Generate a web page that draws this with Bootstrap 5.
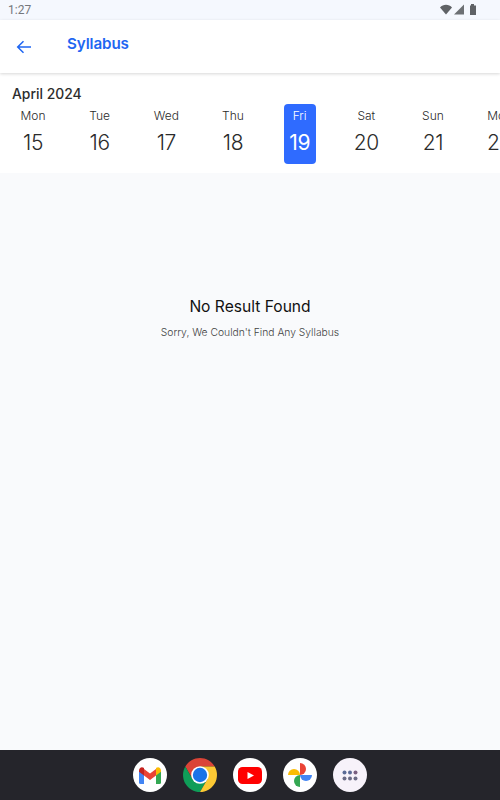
<!DOCTYPE html>
<html lang="en">
<head>
  <meta charset="UTF-8">
  <title>Syllabus</title>
  <meta name="viewport" content="width=device-width, initial-scale=1">
  <link href="https://cdn.jsdelivr.net/npm/bootstrap@5.3.0/dist/css/bootstrap.min.css" rel="stylesheet">
  <style>
    html, body { height: 800px; overflow: hidden; }
    body { background: #f9fafc; font-family: Inter, "Liberation Sans", sans-serif; }
    .status-strip { height: 20px; background: #f5f8fe; color: #74777c; font-family: Roboto, sans-serif; font-size: 12px; padding: 0 0 0 8px; }
    .status-icons { margin-right: 23px; }
    .app-head { height: 53px; background: #fff; box-shadow: 0 1px 3px rgba(0,0,0,.16); position: relative; z-index: 1; padding-left: 16px; }
    .app-title { color: #1f66f2; font-size: 15.2px; font-weight: 600; margin-left: 35px; margin-top: -5px; letter-spacing: -.1px; }
    .week-panel { height: 100px; background: #fff; overflow: hidden; }
    .month-name { color: #2d2d2d; font-size: 13.9px; font-weight: 500; padding: 13px 0 0 12px; line-height: 16px; }
    .week-row { width: 534px; margin-top: 2px; margin-left: -.3px; }
    .day-cell { width: 66.67px; flex: none; height: 60px; }
    .day-box { width: 32px; height: 60px; margin: 0 auto; text-align: center; border-radius: 4px; color: #2b2b2b; white-space: nowrap; display: flex; flex-direction: column; align-items: center; }
    .day-box.picked { background: #2f6bff; color: #fff; }
    .day-name { font-size: 12px; font-weight: 300; line-height: 16px; margin-top: 4px; }
    .day-num { font-size: 21px; font-weight: 300; line-height: 26px; margin-top: 6px; letter-spacing: -.3px; }
    .picked .day-num { font-weight: 400; }
    .empty-wrap { height: 577px; padding-top: 124px; }
    .empty-title { color: #111; font-size: 15.6px; font-weight: 400; line-height: 20px; }
    .empty-text { color: #3f3f3f; font-size: 10.3px; font-weight: 300; line-height: 14px; margin-top: 8px; }
    .dock { height: 50px; background: #25252b; gap: 16px; }
    .dock-icon { width: 34px; height: 34px; border-radius: 50%; background: #fff; }
    .dock-icon.tint { background: #f7f2fa; }
    .dock-icon.bare { background: transparent; }
  </style>
</head>
<body>
  <!-- status bar -->
  <div class="status-strip d-flex align-items-center justify-content-between">
    <span>1:27</span>
    <svg class="status-icons" width="38" height="12" viewBox="0 0 38 12">
      <path d="M1 3.500C4-.2 10-.2 13 3.500L7 10.500Z" fill="#5f6266"/>
      <path d="M15 10.500L25 .5V10.500Z" fill="#6d7074"/>
      <path d="M32 1.500V0h3v1.500H37V11H31V1.500Z" fill="#5f6266"/>
    </svg>
  </div>

  <!-- header -->
  <div class="app-head d-flex align-items-center">
    <svg width="16" height="14" viewBox="0 0 16 14" fill="none" stroke="#1f66f2" stroke-width="1.500">
      <path d="M15 7H2M7.500 1.200L1.700 7l5.800 5.800"/>
    </svg>
    <div class="app-title">Syllabus</div>
  </div>

  <!-- calendar -->
  <div class="week-panel">
    <div class="month-name">April 2024</div>
    <div class="week-row d-flex" id="weekRow"></div>
  </div>

  <!-- empty state -->
  <div class="empty-wrap text-center">
    <div class="empty-title">No Result Found</div>
    <div class="empty-text">Sorry, We Couldn't Find Any Syllabus</div>
  </div>

  <!-- launcher -->
  <div class="dock d-flex align-items-center justify-content-center">
    <div class="dock-icon d-flex align-items-center justify-content-center">
      <svg width="22" height="17" viewBox="0 0 22 17">
        <path d="M0 3.500V15.500Q0 17 1.500 17H5V7.500Z" fill="#4285f4"/>
        <path d="M17 7.500V17h3.500Q22 17 22 15.500V3.500Z" fill="#34a853"/>
        <path d="M5 2L11 6.500 17 2V8.500L11 13 5 8.500Z" fill="#ea4335"/>
        <path d="M0 3.500C0 .5 3-.8 5 1V8.500L0 4.700Z" fill="#c5221f"/>
        <path d="M22 3.500C22 .5 19-.8 17 1V8.500L22 4.700Z" fill="#fbbc04"/>
      </svg>
    </div>
    <div class="dock-icon bare d-flex align-items-center justify-content-center">
      <svg width="34" height="34" viewBox="0 0 34 34">
        <path d="M2.300 8.500A17 17 0 0 1 31.700 8.500H17L9.600 21.300Z" fill="#db4437"/>
        <path d="M2.300 8.500A17 17 0 0 0 17 34L24.400 21.300H9.600Z" fill="#0f9d58"/>
        <path d="M31.700 8.500A17 17 0 0 1 17 34L24.400 21.300 17 8.500Z" fill="#fcc934"/>
        <circle cx="17" cy="17" r="8.800" fill="#fff"/>
        <circle cx="17" cy="17" r="7.200" fill="#1a73e8"/>
      </svg>
    </div>
    <div class="dock-icon d-flex align-items-center justify-content-center">
      <svg width="24" height="17" viewBox="0 0 24 17">
        <rect width="24" height="17" rx="4.500" fill="#f00"/>
        <path d="M9.500 5L16 8.500 9.500 12Z" fill="#fff"/>
      </svg>
    </div>
    <div class="dock-icon d-flex align-items-center justify-content-center">
      <svg width="24" height="24" viewBox="0 0 24 24">
        <path d="M12 12V0A6 6 0 0 1 12 12Z" fill="#ea4335"/>
        <path d="M12 12H24A6 6 0 0 1 12 12Z" fill="#4285f4"/>
        <path d="M12 12V24A6 6 0 0 1 12 12Z" fill="#34a853"/>
        <path d="M12 12H0A6 6 0 0 1 12 12Z" fill="#fbbc04"/>
      </svg>
    </div>
    <div class="dock-icon tint d-flex align-items-center justify-content-center">
      <svg width="16" height="11" viewBox="0 0 16 11">
        <circle cx="2.500" cy="2.500" r="2" fill="#5b6b96"/><circle cx="8" cy="2.500" r="2" fill="#5b6b96"/><circle cx="13.500" cy="2.500" r="2" fill="#7a5f80"/>
        <circle cx="2.500" cy="8.500" r="2" fill="#6b6b85"/><circle cx="8" cy="8.500" r="2" fill="#6b6b85"/><circle cx="13.500" cy="8.500" r="2" fill="#6b6b85"/>
      </svg>
    </div>
  </div>

  <script>
    const days = [["Mon",15],["Tue",16],["Wed",17],["Thu",18],["Fri",19],["Sat",20],["Sun",21],["Mon",22]];
    document.getElementById("weekRow").innerHTML = days.map(d =>
      `<div class="day-cell"><div class="day-box ${d[1] === 19 ? "picked" : ""}">
        <div class="day-name">${d[0]}</div><div class="day-num">${d[1]}</div></div></div>`
    ).join("");
  </script>
  <script src="https://cdn.jsdelivr.net/npm/bootstrap@5.3.0/dist/js/bootstrap.bundle.min.js"></script>
</body>
</html>
